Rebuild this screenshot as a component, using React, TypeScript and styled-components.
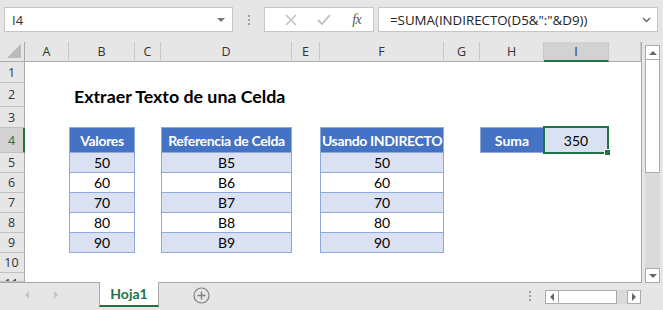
import React from "react";
import styled, { createGlobalStyle, css } from "styled-components";

const GlobalStyle = createGlobalStyle`
  html, body { margin: 0; padding: 0; background: #e6e6e6; }
  body { font-family: "Open Sans", "Noto Sans", sans-serif; }
`;

const GREEN = "#217346";
const HEAD_BG = "#e6e6e6";
const LINE = "#ababab";
const BLUE = "#4472c4";
const BAND = "#d9e1f2";
const TBORDER = "#8ea9db";
const CELL_FONT = `"Lato", "Noto Sans", sans-serif`;

const Window = styled.div`
  width: 663px;
  height: 310px;
  display: flex;
  flex-direction: column;
  background: #e6e6e6;
  overflow: hidden;
`;

const FormulaBar = styled.div`
  height: 42px;
  box-sizing: border-box;
  padding: 7px 0 0 4px;
  display: flex;
  align-items: flex-start;
`;

const Field = styled.div<{ $w: number }>`
  width: ${(p) => p.$w}px;
  height: 25px;
  box-sizing: border-box;
  background: #fff;
  border: 1px solid #c6c6c6;
  display: flex;
  align-items: center;
  position: relative;
`;

const NameText = styled.span`
  font-family: "Open Sans", sans-serif;
  font-size: 13px;
  color: #333;
  padding-left: 7px;
  flex: 1;
`;

const Caret = styled.span`
  width: 0;
  height: 0;
  border-left: 4px solid transparent;
  border-right: 4px solid transparent;
  border-top: 4px solid #777;
  margin-right: 7px;
`;

const Grip = styled.div`
  width: 31px;
  height: 25px;
  display: flex;
  flex-direction: column;
  align-items: center;
  justify-content: center;
  gap: 2px;
  span {
    width: 2px;
    height: 2px;
    background: #a0a0a0;
  }
`;

const FieldGap = styled.div`
  width: 4px;
`;

const FnButtons = styled.div`
  display: flex;
  align-items: center;
  width: 100%;
  padding-left: 10px;
  box-sizing: border-box;
`;

const FnIcon = styled.div<{ $w: number }>`
  width: ${(p) => p.$w}px;
  display: flex;
  justify-content: center;
  align-items: center;
`;

const FxText = styled.span`
  font-family: "Liberation Serif", serif;
  font-style: italic;
  font-size: 14px;
  color: #555;
  letter-spacing: -0.5px;
`;

const FormulaText = styled.span`
  font-family: "Open Sans", sans-serif;
  font-size: 13.3px;
  color: #222;
  padding-left: 11px;
  flex: 1;
  white-space: nowrap;
`;

const Chevron = styled.svg`
  margin-right: 6px;
`;

const Main = styled.div`
  display: flex;
  height: 241px;
`;

const Sheet = styled.div`
  width: 642px;
  height: 241px;
  box-sizing: border-box;
  border-right: 1px solid #a8a8a8;
  border-bottom: 1px solid #a8a8a8;
  background: #fff;
  display: grid;
  grid-template-columns: 25px 44px 66px 26px 131px 28px 124px 36px 64px 65px 1fr;
  grid-template-rows: 20px 21px 24px 21px 25px 20px 20px 20px 20px 20px 20px 1fr;
  overflow: hidden;
`;

const headerText = css`
  font-family: "Open Sans", "Noto Sans", sans-serif;
  font-size: 12.5px;
  color: #333;
`;

const Corner = styled.div`
  background: ${HEAD_BG};
  border-right: 1px solid ${LINE};
  border-bottom: 1px solid ${LINE};
  box-sizing: border-box;
  position: relative;
  &::after {
    content: "";
    position: absolute;
    right: 3px;
    bottom: 3px;
    width: 0;
    height: 0;
    border-left: 14px solid transparent;
    border-bottom: 14px solid #b9b9b9;
  }
`;

const ColHead = styled.div<{ $sel?: boolean }>`
  ${headerText};
  background: ${(p) => (p.$sel ? "#d2d2d2" : HEAD_BG)};
  box-sizing: border-box;
  border-right: 1px solid #c8c8c8;
  border-bottom: ${(p) => (p.$sel ? `2px solid ${GREEN}` : `1px solid ${LINE}`)};
  display: flex;
  align-items: center;
  justify-content: center;
  padding-top: ${(p) => (p.$sel ? "1px" : "0")};
  overflow: hidden;
  white-space: nowrap;
`;

const RowHead = styled.div<{ $sel?: boolean; $row: number }>`
  ${headerText};
  grid-column: 1;
  grid-row: ${(p) => p.$row + 1};
  color: ${(p) => (p.$sel ? GREEN : "#333")};
  background: ${(p) => (p.$sel ? "#d2d2d2" : HEAD_BG)};
  box-sizing: border-box;
  border-bottom: 1px solid #c0c0c0;
  border-right: ${(p) => (p.$sel ? `2px solid ${GREEN}` : `1px solid ${LINE}`)};
  display: flex;
  align-items: ${(p) => (p.$row === 11 ? "flex-start" : "center")};
  justify-content: center;
  overflow: hidden;
  padding-right: ${(p) => (p.$sel ? "0" : "1px")};
  line-height: ${(p) => (p.$row === 11 ? "22px" : "normal")};
`;

const Title = styled.div`
  grid-column: 3 / 8;
  grid-row: 3;
  font-family: ${CELL_FONT};
  font-weight: 700;
  font-size: 17.8px;
  color: #000;
  padding-left: 5px;
  display: flex;
  align-items: flex-end;
  white-space: nowrap;
`;

const TableBox = styled.table<{ $col: number }>`
  grid-column: ${(p) => p.$col};
  grid-row: 5 / 11;
  border-collapse: collapse;
  width: 100%;
  height: 125px;
  margin-top: -1px;
  font-family: ${CELL_FONT};
  font-size: 14px;
  table-layout: fixed;
`;

const Th = styled.th`
  background: ${BLUE};
  color: #fff;
  font-weight: 700;
  letter-spacing: -0.35px;
  height: 24px;
  border: 1px solid ${TBORDER};
  padding: 0;
  white-space: nowrap;
  text-align: center;
  overflow: hidden;
`;

const Td = styled.td<{ $band: boolean }>`
  background: ${(p) => (p.$band ? BAND : "#fff")};
  color: #000;
  height: 19px;
  border: 1px solid ${TBORDER};
  padding: 0;
  text-align: center;
`;

const SumLabel = styled.div`
  grid-column: 9;
  grid-row: 5;
  background: ${BLUE};
  color: #fff;
  font-family: ${CELL_FONT};
  font-weight: 700;
  font-size: 14px;
  box-sizing: border-box;
  border: 1px solid ${TBORDER};
  margin-top: -1px;
  display: flex;
  align-items: center;
  justify-content: center;
`;

const SumValue = styled.div`
  grid-column: 10;
  grid-row: 5;
  background: ${BAND};
  font-family: ${CELL_FONT};
  font-size: 14px;
  color: #000;
  box-sizing: border-box;
  border: 2px solid ${GREEN};
  margin: -2px 0 -1px -1px;
  display: flex;
  align-items: center;
  justify-content: center;
  position: relative;
  &::after {
    content: "";
    position: absolute;
    right: -4px;
    bottom: -4px;
    width: 5px;
    height: 5px;
    background: ${GREEN};
    border: 1px solid #fff;
  }
`;

const VScroll = styled.div`
  width: 21px;
  display: flex;
  flex-direction: column;
  padding: 3px 0 0 3px;
  box-sizing: border-box;
`;

const ArrowBox = styled.div`
  width: 15px;
  height: 15px;
  box-sizing: border-box;
  background: #fff;
  border: 1px solid ${LINE};
  display: flex;
  align-items: center;
  justify-content: center;
`;

const Tri = styled.span<{ $dir: "up" | "down" | "left" | "right"; $c?: string }>`
  width: 0;
  height: 0;
  ${(p) =>
    p.$dir === "up"
      ? css`border-left: 4px solid transparent; border-right: 4px solid transparent; border-bottom: 4px solid ${p.$c || "#666"};`
      : p.$dir === "down"
      ? css`border-left: 4px solid transparent; border-right: 4px solid transparent; border-top: 4px solid ${p.$c || "#666"};`
      : p.$dir === "left"
      ? css`border-top: 4px solid transparent; border-bottom: 4px solid transparent; border-right: 4px solid ${p.$c || "#666"};`
      : css`border-top: 4px solid transparent; border-bottom: 4px solid transparent; border-left: 4px solid ${p.$c || "#666"};`}
`;

const VThumb = styled.div`
  width: 15px;
  height: 113px;
  box-sizing: border-box;
  background: #fff;
  border: 1px solid ${LINE};
  border-top: none;
`;

const VTrack = styled.div`
  width: 15px;
  flex: 1;
  background: #dadada;
`;

const TabBar = styled.div`
  height: 27px;
  display: flex;
  align-items: flex-start;
`;

const NavArrows = styled.div`
  width: 99px;
  height: 24px;
  display: flex;
  align-items: center;
  padding-left: 25px;
  gap: 25px;
  box-sizing: border-box;
`;

const SheetTab = styled.div`
  width: 60px;
  height: 25px;
  box-sizing: border-box;
  background: #fff;
  border-left: 1px solid #a8a8a8;
  border-right: 1px solid #a8a8a8;
  border-bottom: 2px solid ${GREEN};
  margin-top: -1px;
  display: flex;
  align-items: center;
  justify-content: center;
  font-family: ${CELL_FONT};
  font-weight: 700;
  font-size: 14px;
  color: ${GREEN};
`;

const AddSheet = styled.div`
  width: 85px;
  height: 24px;
  display: flex;
  align-items: center;
  justify-content: center;
`;

const Spacer = styled.div`
  flex: 1;
`;

const TabGrip = styled(Grip)`
  width: 30px;
  height: 26px;
`;

const HScroll = styled.div`
  display: flex;
  align-items: center;
  margin-top: 7px;
  margin-right: 22px;
  height: 14px;
  width: 96px;
`;

const HArrow = styled.div`
  width: 14px;
  height: 14px;
  box-sizing: border-box;
  background: #fff;
  border: 1px solid ${LINE};
  display: flex;
  align-items: center;
  justify-content: center;
`;

const HThumb = styled.div`
  width: 58px;
  height: 14px;
  box-sizing: border-box;
  background: #fff;
  border: 1px solid ${LINE};
  border-left: none;
`;

const HTrack = styled.div`
  flex: 1;
  height: 14px;
  background: #dadada;
`;

const cols = ["A", "B", "C", "D", "E", "F", "G", "H", "I", "J"];
const rows = [1, 2, 3, 4, 5, 6, 7, 8, 9, 10, 11];

const tables = [
  { col: 3, head: "Valores", data: ["50", "60", "70", "80", "90"] },
  { col: 5, head: "Referencia de Celda", data: ["B5", "B6", "B7", "B8", "B9"] },
  { col: 7, head: "Usando INDIRECTO", data: ["50", "60", "70", "80", "90"] },
];

export default function App() {
  return (
    <Window>
      <GlobalStyle />
      <FormulaBar>
        <Field $w={229}>
          <NameText>I4</NameText>
          <Caret />
        </Field>
        <Grip>
          <span />
          <span />
          <span />
        </Grip>
        <Field $w={110}>
          <FnButtons>
            <FnIcon $w={36}>
              <svg width="12" height="12" viewBox="0 0 12 12">
                <path d="M1 1 L11 11 M11 1 L1 11" stroke="#bdbdbd" strokeWidth="1.4" fill="none" />
              </svg>
            </FnIcon>
            <FnIcon $w={36}>
              <svg width="14" height="12" viewBox="0 0 14 12">
                <path d="M1 6 L5 10 L13 1" stroke="#bdbdbd" strokeWidth="1.8" fill="none" />
              </svg>
            </FnIcon>
            <FnIcon $w={36}>
              <FxText>fx</FxText>
            </FnIcon>
          </FnButtons>
        </Field>
        <FieldGap />
        <Field $w={280}>
          <FormulaText>=SUMA(INDIRECTO(D5&amp;":"&amp;D9))</FormulaText>
          <Chevron width="9" height="6" viewBox="0 0 9 6">
            <path d="M1 1 L4.5 4.5 L8 1" stroke="#666" strokeWidth="1.4" fill="none" />
          </Chevron>
        </Field>
      </FormulaBar>
      <Main>
        <Sheet>
          <Corner />
          {cols.map((c) => (
            <ColHead key={c} $sel={c === "I"}>
              {c === "J" ? "" : c}
            </ColHead>
          ))}
          {rows.map((r) => (
            <RowHead key={r} $row={r} $sel={r === 4}>
              {r}
            </RowHead>
          ))}
          <Title>Extraer Texto de una Celda</Title>
          {tables.map((t) => (
            <TableBox key={t.col} $col={t.col}>
              <thead>
                <tr>
                  <Th>{t.head}</Th>
                </tr>
              </thead>
              <tbody>
                {t.data.map((d, i) => (
                  <tr key={d}>
                    <Td $band={i % 2 === 0}>{d}</Td>
                  </tr>
                ))}
              </tbody>
            </TableBox>
          ))}
          <SumLabel>Suma</SumLabel>
          <SumValue>350</SumValue>
        </Sheet>
        <VScroll>
          <ArrowBox>
            <Tri $dir="up" />
          </ArrowBox>
          <VThumb />
          <VTrack />
          <ArrowBox>
            <Tri $dir="down" />
          </ArrowBox>
        </VScroll>
      </Main>
      <TabBar>
        <NavArrows>
          <Tri $dir="left" $c="#c4c4c4" />
          <Tri $dir="right" $c="#c4c4c4" />
        </NavArrows>
        <SheetTab>Hoja1</SheetTab>
        <AddSheet>
          <svg width="17" height="17" viewBox="0 0 17 17">
            <circle cx="8.5" cy="8.5" r="7.5" stroke="#808080" strokeWidth="1.2" fill="none" />
            <path d="M8.5 4.5 V12.5 M4.5 8.5 H12.5" stroke="#808080" strokeWidth="1.4" />
          </svg>
        </AddSheet>
        <Spacer />
        <TabGrip>
          <span />
          <span />
          <span />
        </TabGrip>
        <HScroll>
          <HArrow>
            <Tri $dir="left" />
          </HArrow>
          <HThumb />
          <HTrack />
          <HArrow>
            <Tri $dir="right" />
          </HArrow>
        </HScroll>
      </TabBar>
    </Window>
  );
}
